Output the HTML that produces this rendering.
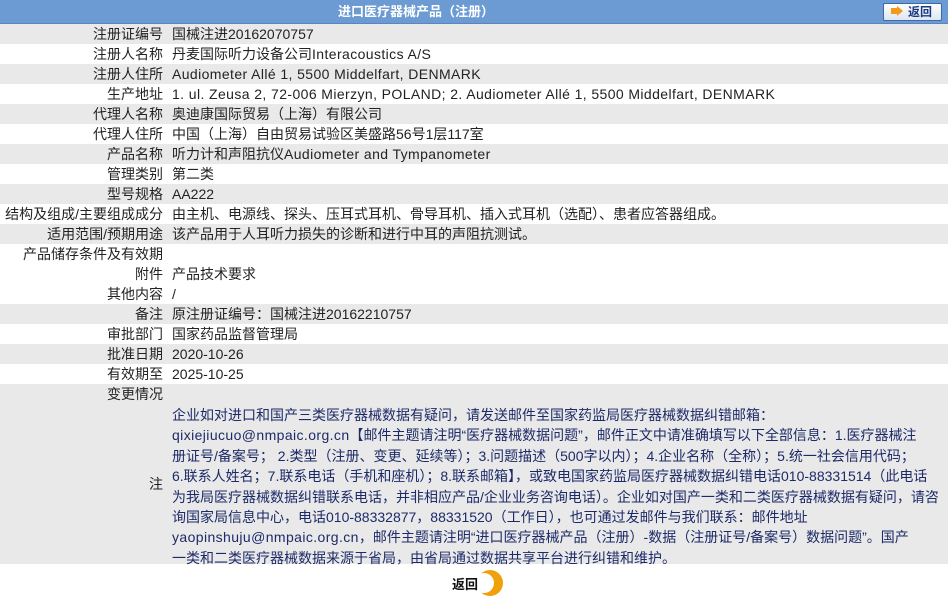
<!DOCTYPE html>
<html><head><meta charset="utf-8"><style>
*{margin:0;padding:0;box-sizing:border-box}
body{width:948px;height:601px;background:#fff;font-family:"Liberation Sans","Noto Sans CJK SC",sans-serif;font-size:14px;color:#222;position:relative;overflow:hidden}
.hdr{height:24px;background:#6b9bd2;border-bottom:1px solid #5a86bd;position:relative}
.hdr span{position:absolute;left:0;width:832px;text-align:center;color:#fff;font-weight:bold;font-size:13px;line-height:24px}
.btn{position:absolute;left:883px;top:3px;width:59px;height:18px;border:1px solid #3a6aa8;border-radius:2px;background:linear-gradient(#fff,#dde6f2);color:#1a3a80;font-size:12px;font-weight:bold;line-height:16px;padding-left:24px}
.btn:before{content:"";position:absolute;left:7px;top:4px;width:6px;height:6px;background:#f39a1a}
.btn:after{content:"";position:absolute;left:13px;top:2px;border:5px solid transparent;border-left:6px solid #f39a1a;border-right:0}
.row{height:20px;line-height:20px;display:flex}
.row.g{background:#e9e9e9}
.l{width:163px;text-align:right;flex:none;white-space:nowrap}
.v{padding-left:9px;white-space:nowrap}
.ls{letter-spacing:0.4px}
.note{background:#e9e9e9;display:flex;height:160px}
.note .l{line-height:160px}
.note .v{color:#1d2a68;line-height:20.4px;padding-top:1px;width:778px}
.bk{position:absolute;left:452px;top:574px;font-weight:bold;font-size:13px;color:#111}
.cr{position:absolute;left:477px;top:570px;width:26px;height:26px;border-radius:50%;background:#f0a00a}
.cr:after{content:"";position:absolute;left:-3px;top:3px;width:20px;height:20px;border-radius:50%;background:#fff}
</style></head><body>
<div class="hdr"><span>进口医疗器械产品（注册）</span></div>
<div class="btn">返回</div>
<div class="row g"><div class="l">注册证编号</div><div class="v">国械注进20162070757</div></div>
<div class="row"><div class="l">注册人名称</div><div class="v">丹麦国际听力设备公司<span class="ls">Interacoustics A/S</span></div></div>
<div class="row g"><div class="l">注册人住所</div><div class="v ls">Audiometer Allé 1, 5500 Middelfart, DENMARK</div></div>
<div class="row"><div class="l">生产地址</div><div class="v ls">1. ul. Zeusa 2, 72-006 Mierzyn, POLAND; 2. Audiometer Allé 1, 5500 Middelfart, DENMARK</div></div>
<div class="row g"><div class="l">代理人名称</div><div class="v">奥迪康国际贸易（上海）有限公司</div></div>
<div class="row"><div class="l">代理人住所</div><div class="v">中国（上海）自由贸易试验区美盛路56号1层117室</div></div>
<div class="row g"><div class="l">产品名称</div><div class="v">听力计和声阻抗仪<span class="ls">Audiometer and Tympanometer</span></div></div>
<div class="row"><div class="l">管理类别</div><div class="v">第二类</div></div>
<div class="row g"><div class="l">型号规格</div><div class="v">AA222</div></div>
<div class="row"><div class="l">结构及组成/主要组成成分</div><div class="v">由主机、电源线、探头、压耳式耳机、骨导耳机、插入式耳机（选配）、患者应答器组成。</div></div>
<div class="row g"><div class="l">适用范围/预期用途</div><div class="v">该产品用于人耳听力损失的诊断和进行中耳的声阻抗测试。</div></div>
<div class="row"><div class="l">产品储存条件及有效期</div><div class="v"></div></div>
<div class="row"><div class="l">附件</div><div class="v">产品技术要求</div></div>
<div class="row"><div class="l">其他内容</div><div class="v">/</div></div>
<div class="row g"><div class="l">备注</div><div class="v">原注册证编号：国械注进20162210757</div></div>
<div class="row"><div class="l">审批部门</div><div class="v">国家药品监督管理局</div></div>
<div class="row g"><div class="l">批准日期</div><div class="v">2020-10-26</div></div>
<div class="row"><div class="l">有效期至</div><div class="v">2025-10-25</div></div>
<div class="row g"><div class="l">变更情况</div><div class="v"></div></div>
<div class="note"><div class="l">注</div><div class="v">企业如对进口和国产三类医疗器械数据有疑问，请发送邮件至国家药监局医疗器械数据纠错邮箱：<br><span class="ls">qixiejiucuo@nmpaic.org.cn</span>【邮件主题请注明“医疗器械数据问题”，邮件正文中请准确填写以下全部信息：1.医疗器械注<br>册证号/备案号； 2.类型（注册、变更、延续等）；3.问题描述（500字以内）；4.企业名称（全称）；5.统一社会信用代码；<br>6.联系人姓名；7.联系电话（手机和座机）；8.联系邮箱】，或致电国家药监局医疗器械数据纠错电话010-88331514（此电话<br>为我局医疗器械数据纠错联系电话，并非相应产品/企业业务咨询电话）。企业如对国产一类和二类医疗器械数据有疑问，请咨<br>询国家局信息中心，电话010-88332877，88331520（工作日），也可通过发邮件与我们联系：邮件地址<br><span class="ls">yaopinshuju@nmpaic.org.cn</span>，邮件主题请注明“进口医疗器械产品（注册）-数据（注册证号/备案号）数据问题”。国产<br>一类和二类医疗器械数据来源于省局，由省局通过数据共享平台进行纠错和维护。</div></div>
<div class="cr"></div>
<div class="bk">返回</div>
</body></html>
